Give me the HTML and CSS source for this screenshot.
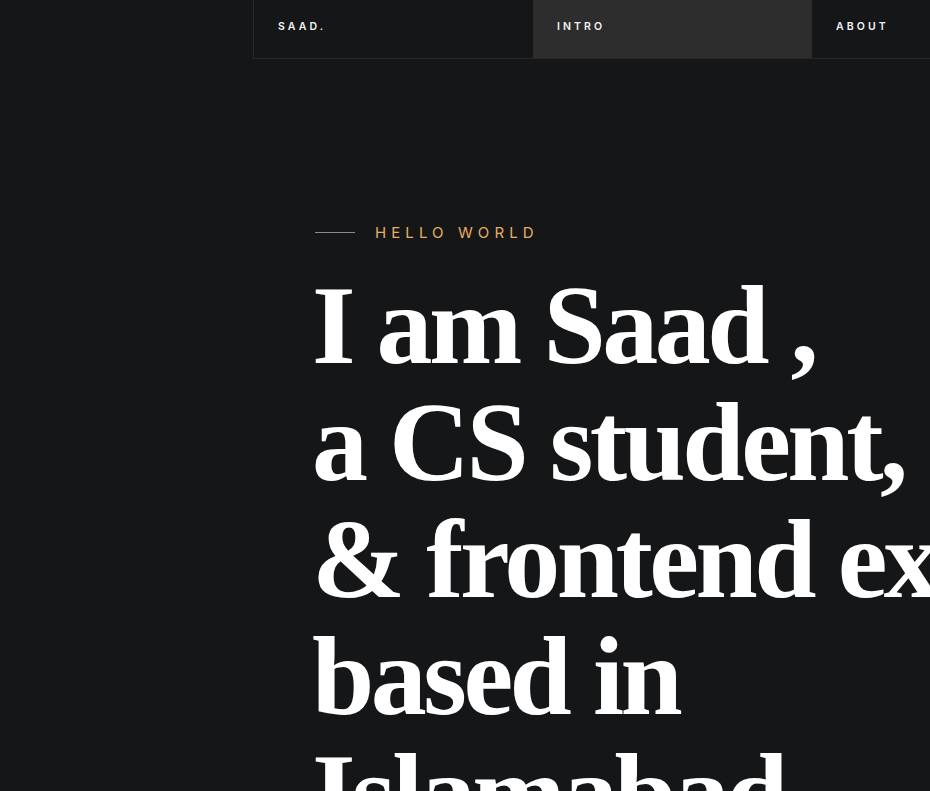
FILE: index.html
```html
<!DOCTYPE html>
<html lang="en">
<head>
<meta charset="utf-8">
<title>Saad</title>
<link rel="stylesheet" href="styles.css">
</head>
<body>
<div class="page">
  <nav class="nav">
    <a class="nav-item" href="#">SAAD.</a>
    <a class="nav-item active" href="#">INTRO</a>
    <a class="nav-item" href="#">ABOUT</a>
    <a class="nav-item" href="#">WORK</a>
  </nav>
  <section class="hero">
    <div class="eyebrow"><span class="rule"></span><span class="eyebrow-text">HELLO WORLD</span></div>
    <h1 class="title">I am Saad ,<br>a CS student,<br>&amp; frontend expert<br>based in<br>Islamabad.</h1>
  </section>
</div>
</body>
</html>
```
FILE: styles.css
```css
html, body {
  margin: 0;
  padding: 0;
  background: #151618;
  overflow: hidden;
}
body {
  width: 930px;
  height: 791px;
  font-family: Inter, "Liberation Sans", sans-serif;
  color: #fff;
}
.page {
  display: flex;
  flex-direction: column;
}
.nav {
  display: flex;
  margin-left: 253px;
  height: 59px;
  border-left: 1px solid #26272a;
  border-bottom: 1px solid #26272a;
  box-sizing: border-box;
  width: 1200px;
}
.nav-item {
  flex: 0 0 279px;
  box-sizing: border-box;
  padding: 0 0 0 24px;
  display: flex;
  align-items: center;
  padding-bottom: 5px;
  color: #f2f2f2;
  text-decoration: none;
  font-size: 10.5px;
  font-weight: 600;
  letter-spacing: 3.1px;
}
.nav-item.active {
  background: #2d2d2e;
}
.hero {
  padding: 163px 0 0 315px;
  white-space: nowrap;
}
.eyebrow {
  display: flex;
  align-items: center;
  gap: 20px;
  height: 20px;
}
.rule {
  width: 40px;
  height: 1px;
  background: #8a8a8a;
}
.eyebrow-text {
  color: #e8ad62;
  font-size: 15px;
  letter-spacing: 5.1px;
  font-weight: 400;
}
.title {
  margin: 25px 0 0 -3px;
  font-family: "Liberation Serif", "Times New Roman", serif;
  font-weight: 700;
  font-size: 112px;
  line-height: 117px;
  letter-spacing: -3.5px;
  color: #fff;
}
```
